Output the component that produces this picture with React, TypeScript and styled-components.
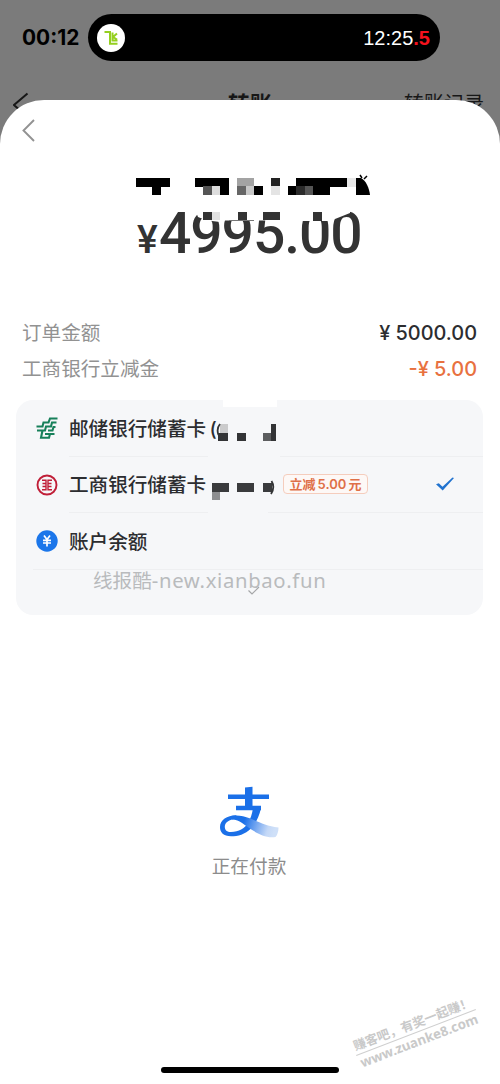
import React from "react";
import styled, { createGlobalStyle } from "styled-components";

const Global = createGlobalStyle`
  * { box-sizing: border-box; }
  html, body { margin: 0; padding: 0; background: #7b7b7b; }
  body { font-family: Inter, "Noto Sans CJK SC", sans-serif; color: #2c2d30; }
  svg { display: block; flex: none; }
`;

const Screen = styled.div`
  display: flow-root;
  width: 500px;
  height: 1084px;
  overflow: hidden;
  background: #7b7b7b;
  position: relative;
`;

const StatusBar = styled.header`
  display: flex;
  align-items: center;
  height: 47px;
  margin-top: 14px;
  padding-left: 22px;
`;

const Clock = styled.div`
  width: 66px;
  font-size: 20.9px;
  line-height: 24px;
  font-weight: 700;
  color: #000;
  white-space: nowrap;
`;

const Island = styled.div`
  display: flex;
  align-items: center;
  justify-content: space-between;
  width: 352px;
  height: 47px;
  padding: 0 10px 0 9px;
  border-radius: 24px;
  background: #000;
`;

const Timer = styled.div`
  font: 20px/24px "Liberation Sans", sans-serif;
  color: #fff;
  white-space: nowrap;
  b { color: #f5121d; }
`;

const PageNav = styled.div`
  display: flex;
  align-items: flex-start;
  height: 39px;
  padding: 24px 16px 0 13px;
  white-space: nowrap;
  color: #171717;
`;

const NavTitle = styled.div`
  margin: 3px 0 0 197px;
  font-size: 22px;
  line-height: 32px;
  font-weight: 700;
`;

const NavLink = styled.div`
  margin: 4px 0 0 auto;
  font-size: 20px;
  line-height: 30px;
`;

const Sheet = styled.main`
  display: flex;
  flex-direction: column;
  position: relative;
  height: 984px;
  border-radius: 44px 44px 0 0;
  background: #fff;
`;

const SheetHead = styled.div`
  height: 74px;
  padding: 18px 0 0 21px;
`;

const Redaction = styled.div`
  height: 24px;
  padding-left: 130px;
`;

const AmountRow = styled.div`
  display: flex;
  align-items: baseline;
  position: relative;
  height: 64px;
  padding: 1px 0 0 137px;
  font-family: Roboto, sans-serif;
  font-weight: 500;
  color: #333;
  white-space: nowrap;
`;

const Currency = styled.span`
  width: 22px;
  font-size: 39px;
  line-height: 64px;
`;

const Amount = styled.span`
  font-size: 57px;
  line-height: 70px;
  letter-spacing: -1.1px;
`;

const AmountMask = styled.svg`
  position: absolute;
  left: 160px;
  top: 6px;
`;

const Summary = styled.section`
  display: flex;
  flex-direction: column;
  padding: 53px 23px 0 22px;
`;

const SummaryRow = styled.div`
  display: flex;
  justify-content: space-between;
  align-items: flex-start;
  height: 36px;
  font-size: 19.6px;
  line-height: 37px;
  color: #929292;
  white-space: nowrap;
`;

const Price = styled.span<{ $accent?: boolean }>`
  font-size: 19.9px;
  line-height: 36px;
  font-weight: 500;
  color: ${(p) => (p.$accent ? "#e8713f" : "#2c2d30")};
`;

const Methods = styled.section`
  position: relative;
  width: 467px;
  height: 215px;
  margin: 13px 0 0 16px;
  border-radius: 17px;
  background: #f6f7f9;
`;

const Method = styled.div<{ $inset?: number; $gapEnd?: number }>`
  display: flex;
  align-items: center;
  height: 56.5px;
  padding-left: 20px;
  white-space: nowrap;
  background: linear-gradient(
      to right,
      transparent ${(p) => p.$inset ?? 53}px,
      #eeeff1 ${(p) => p.$inset ?? 53}px 192px,
      transparent 192px ${(p) => p.$gapEnd ?? 192}px,
      #eeeff1 ${(p) => p.$gapEnd ?? 192}px
    )
    left bottom / 100% 1px no-repeat;
`;

const MethodName = styled.span<{ $width?: number }>`
  width: ${(p) => (p.$width ? `${p.$width}px` : "auto")};
  margin: -2px 0 0 11px;
  font-size: 19.6px;
  font-weight: 500;
`;

const Tag = styled.span`
  display: flex;
  align-items: center;
  justify-content: center;
  width: 85px;
  height: 20px;
  margin-top: -2px;
  border: 1px solid #f5cdbd;
  border-radius: 4px;
  background: #fdf8f6;
  color: #df7048;
  font-size: 13px;
  line-height: 18px;
  font-weight: 600;
  i { font-style: normal; margin: 0 2px; }
`;

const MethodMask = styled.svg`
  position: absolute;
  left: 194px;
  top: 0;
`;

const MethodCheck = styled.div`
  margin: -2px 0 0 67px;
`;

const Watermark = styled.div`
  position: absolute;
  left: 77px;
  top: 166px;
  font: 19.6px/28px "Noto Sans", "Noto Sans CJK SC", sans-serif;
  color: #b9bbbd;
  white-space: nowrap;
`;

const WatermarkSite = styled.span`
  font-size: 20.3px;
  letter-spacing: 0.65px;
`;

const MoreArrow = styled.svg`
  position: absolute;
  left: 231px;
  top: 185px;
`;

const Paying = styled.section`
  display: flex;
  flex-direction: column;
  align-items: center;
  padding: 171px 2px 0 0;
  font-size: 18.7px;
  line-height: 28px;
  color: #8c8c8c;
`;

const PayingText = styled.div`
  margin-top: 14px;
`;

const Stamp = styled.div`
  position: absolute;
  left: 352px;
  top: 1015px;
  width: 128px;
  transform: rotate(-21deg);
  font: 700 13.3px/17px "Noto Sans", "Noto Sans CJK SC", sans-serif;
  color: #c9c9c9;
  white-space: nowrap;
  text-align: center;
`;

const StampLine = styled.div`
  border-bottom: 1px solid #cfcfcf;
  font-size: 12.6px;
`;

const HomeBar = styled.div`
  width: 178px;
  height: 6px;
  margin: auto auto 11px 161px;
  border-radius: 3px;
  background: #000;
`;

type Block = [number, number, number, number, string];

const Blocks = ({ data }: { data: Block[] }) => (
  <>
    {data.map(([x, y, w, h, c], i) => (
      <rect key={i} x={x} y={y} width={w} height={h} fill={c} />
    ))}
  </>
);

const nameBlocks: Block[] = [
  [6, 4, 34, 9, "#000"], [22, 12, 9, 9, "#000"],
  [65, 4, 34, 9, "#000"], [73, 12, 9, 9, "#555"], [82, 12, 8, 9, "#ddd"], [90, 12, 9, 9, "#000"],
  [107, 4, 17, 9, "#a3a3a3"], [107, 12, 9, 9, "#666"], [116, 12, 8, 9, "#c8c8c8"], [124, 12, 9, 9, "#000"],
  [141, 4, 9, 9, "#222"], [141, 12, 9, 9, "#e4e4e4"],
  [166, 4, 51, 9, "#000"], [158, 12, 8, 9, "#000"], [166, 12, 9, 9, "#2b2b2b"], [175, 12, 8, 9, "#555"], [183, 12, 17, 9, "#000"],
  [217, 4, 9, 9, "#e8e8e8"],
];

const amountBlocks: Block[] = [
  [43, 8, 9, 8, "#333"], [52, 8, 8, 8, "#e2e2e2"],
  [78, 8, 9, 9, "#333"], [69, 16, 25, 1, "#777"],
  [103, 8, 17, 8, "#333"],
  [153, 8, 9, 9, "#333"],
];

const cardBlocks: Block[] = [
  [10, 24, 8, 9, "#cbcbcc"], [8, 33, 10, 8, "#333436"],
  [27, 33, 9, 8, "#333436"], [53, 33, 9, 8, "#5c5d5f"], [61, 24, 5, 17, "#333436"],
  [2, 83, 17, 9, "#3a3b3d"], [2, 92, 8, 8, "#8d8e90"],
  [27, 83, 17, 9, "#3a3b3d"], [53, 83, 9, 9, "#3a3b3d"],
];

const App = () => (
  <>
    <Global />
    <Screen>
      <StatusBar>
        <Clock>00:12</Clock>
        <Island>
          <svg width="28" height="28" viewBox="0 0 28 28">
            <circle cx="14" cy="14" r="14" fill="#fff" />
            <path d="M7.500 8h5.500v11.800h7.500M15.500 8.500v8h5M20 9.500l-4 3.500M16 13l4 2.500" fill="none" stroke="#95cf20" strokeWidth="2" />
          </svg>
          <Timer>12:25<b>.5</b></Timer>
        </Island>
      </StatusBar>
      <PageNav>
        <svg width="18" height="34" viewBox="0 0 18 34">
          <path d="M14.500 8.500L1 20l13.500 12" fill="none" stroke="#171717" strokeWidth="2" />
        </svg>
        <NavTitle>转账</NavTitle>
        <NavLink>转账记录</NavLink>
      </PageNav>
      <Sheet>
        <SheetHead>
          <svg width="16" height="25" viewBox="0 0 16 25">
            <path d="M13 2L2.500 12.500L13 23" fill="none" stroke="#929292" strokeWidth="1.900" />
          </svg>
        </SheetHead>
        <Redaction>
          <svg width="245" height="24" viewBox="0 0 245 24">
            <Blocks data={nameBlocks} />
            <path d="M226 21V4h5c5 3 8 9 9 17z" />
            <path d="M230 1l2 3M237 2l-3 3" stroke="#000" strokeWidth="1.500" />
          </svg>
        </Redaction>
        <AmountRow>
          <Currency>¥</Currency>
          <Amount>4995.00</Amount>
          <AmountMask width="205" height="24" viewBox="0 0 205 24">
            <path d="M30 0H190V9L175 15L168 17H140V15.500H120V16.500H60V18L52 17L43 15L38 13L36 8H30Z" fill="#fff" />
            <Blocks data={amountBlocks} />
          </AmountMask>
        </AmountRow>
        <Summary>
          <SummaryRow><span>订单金额</span><Price>¥ 5000.00</Price></SummaryRow>
          <SummaryRow><span>工商银行立减金</span><Price $accent>-¥ 5.00</Price></SummaryRow>
        </Summary>
        <Methods>
          <Method $gapEnd={264}>
            <svg width="22" height="22" viewBox="0 0 22 22">
              <path d="M21.500 1.500H14L12.500 5.500H7.500L6.500 9.500H.500M20.500 5.500H16L15 9.500H10L9 13.500H1M19.500 10H17.500L16.500 13.500H12M18.500 17H14L13 20.800H5L6.500 13.500M9 17H13" fill="none" stroke="#17805a" strokeWidth="2.100" />
            </svg>
            <MethodName>邮储银行储蓄卡&thinsp;(</MethodName>
          </Method>
          <Method $gapEnd={252}>
            <svg width="22" height="22" viewBox="0 0 22 22">
              <circle cx="11" cy="11" r="9.500" fill="none" stroke="#c01f38" strokeWidth="1.900" />
              <path d="M6 6.300H10V9.500H6.500M6.500 12.500H10V15.700H6M16 6.300H12V9.500H15.500M15.500 12.500H12V15.700H16M10 9V13M12 9V13" fill="none" stroke="#c01f38" strokeWidth="1.400" />
            </svg>
            <MethodName $width={214}>工商银行储蓄卡</MethodName>
            <Tag>立减<i>5.00</i>元</Tag>
            <MethodCheck>
              <svg width="20" height="16" viewBox="0 0 20 16">
                <path d="M1 8.300L3.800 7.300L7.500 10.800L17.500 1.500L19 2L7.700 14.500Z" fill="#2173cf" />
              </svg>
            </MethodCheck>
          </Method>
          <Method $inset={17}>
            <svg width="22" height="22" viewBox="0 0 22 22">
              <circle cx="11" cy="11" r="10.700" fill="#1b76ea" />
              <path d="M8 5.500L11 9.500L14 5.500M7 10.300h8M7 13h8M11 9.500v7" fill="none" stroke="#fff" strokeWidth="1.700" />
            </svg>
            <MethodName>账户余额</MethodName>
          </Method>
          <MethodMask width="80" height="104" viewBox="0 0 80 104">
            <rect x="13" y="0" width="54" height="7" fill="#fff" />
            <Blocks data={cardBlocks} />
            <path d="M10 24C7.500 27 7 31 8.500 35M61.500 81C64 85 63.500 90 61 94" fill="none" stroke="#333436" strokeWidth="1.800" />
          </MethodMask>
          <MoreArrow width="14" height="11" viewBox="0 0 14 11">
            <path d="M1.500 5.500L5 9L12 2" fill="none" stroke="#a5a6a8" strokeWidth="1.200" />
          </MoreArrow>
          <Watermark>线报酷<WatermarkSite>-new.xianbao.fun</WatermarkSite></Watermark>
        </Methods>
        <Paying>
          <svg width="60" height="53" viewBox="0 0 60 53">
            <defs>
              <linearGradient id="swoosh" x1="0" x2="1" y1="0" y2="0.15">
                <stop offset="0.3" stopColor="#1b70e8" />
                <stop offset="0.62" stopColor="#7fadf1" />
                <stop offset="0.85" stopColor="#c3d8f7" />
                <stop offset="1" stopColor="#cfe0f8" />
              </linearGradient>
            </defs>
            <path d="M9 8.500H50V13H9ZM26 1.500L33.500 .800V22H26ZM17 19.800H42V24.200H17Z" fill="#1b70e8" />
            <path d="M34 22H42C40 31 37 37 32 42.500C26 48.500 19 50.300 12 50.300C4.500 50.300 1 46.500 1 41C1 34 8 29.500 17 29.300L20 33C11 32.500 6 36 5.800 40.500C5.700 44 8 46 12 46C20 46 25.500 42.500 29 37C31.500 33 33.200 28 34 22Z" fill="#1b70e8" />
            <path d="M12 30C16 29 20 29.300 24 30.300C36 33 44 40 59.500 41.500C59.500 45 58.500 49 56.500 51C45 52.500 36 46 28 40.500C22 36 18 33.500 13 33.500Z" fill="url(#swoosh)" />
          </svg>
          <PayingText>正在付款</PayingText>
        </Paying>
        <HomeBar />
      </Sheet>
      <Stamp><StampLine>赚客吧，有奖一起赚！</StampLine>www.zuanke8.com</Stamp>
    </Screen>
  </>
);

export default App;
